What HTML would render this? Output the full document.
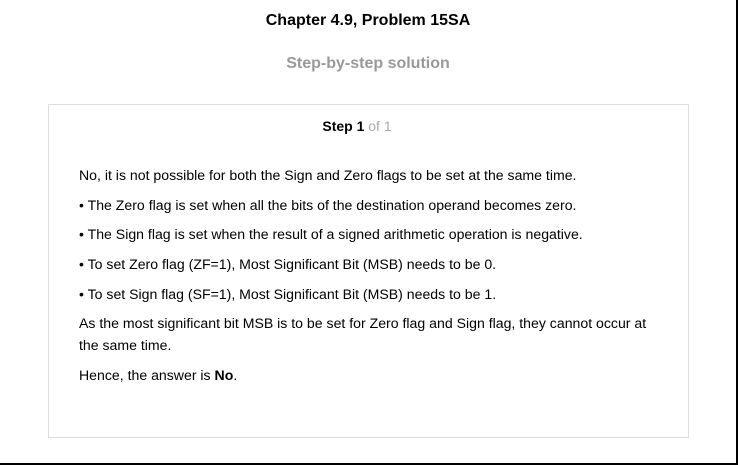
<!DOCTYPE html>
<html><head><style>
html,body{margin:0;padding:0}
body{width:736px;height:463px;border-right:2px solid #000;border-bottom:2px solid #000;background:#fff;font-family:"Liberation Sans",Arial,sans-serif;position:relative;overflow:hidden;color:#000}
.t{position:absolute;left:0;width:736px;text-align:center;font-weight:bold}
.box{position:absolute;left:48px;top:104px;width:639px;height:332px;border:1px solid #ddd;box-sizing:content-box}
.p{position:absolute;left:79px;font-size:14.1px;line-height:22px;white-space:nowrap}
</style></head><body>
<div class="t" style="top:12px;font-size:16px">Chapter 4.9, Problem 15SA</div>
<div class="t" style="top:55px;font-size:16px;color:#999">Step-by-step solution</div>
<div class="box"></div>
<div class="t" style="top:118px;left:-11px;font-size:14px">Step 1 <span style="font-weight:normal;color:#aaa">of 1</span></div>
<div class="p" style="top:164px">No, it is not possible for both the Sign and Zero flags to be set at the same time.</div>
<div class="p" style="top:194px">• The Zero flag is set when all the bits of the destination operand becomes zero.</div>
<div class="p" style="top:223px">• The Sign flag is set when the result of a signed arithmetic operation is negative.</div>
<div class="p" style="top:253px">• To set Zero flag (ZF=1), Most Significant Bit (MSB) needs to be 0.</div>
<div class="p" style="top:283px">• To set Sign flag (SF=1), Most Significant Bit (MSB) needs to be 1.</div>
<div class="p" style="top:312px">As the most significant bit MSB is to be set for Zero flag and Sign flag, they cannot occur at</div>
<div class="p" style="top:334px">the same time.</div>
<div class="p" style="top:364px">Hence, the answer is <b>No</b>.</div>
</body></html>
